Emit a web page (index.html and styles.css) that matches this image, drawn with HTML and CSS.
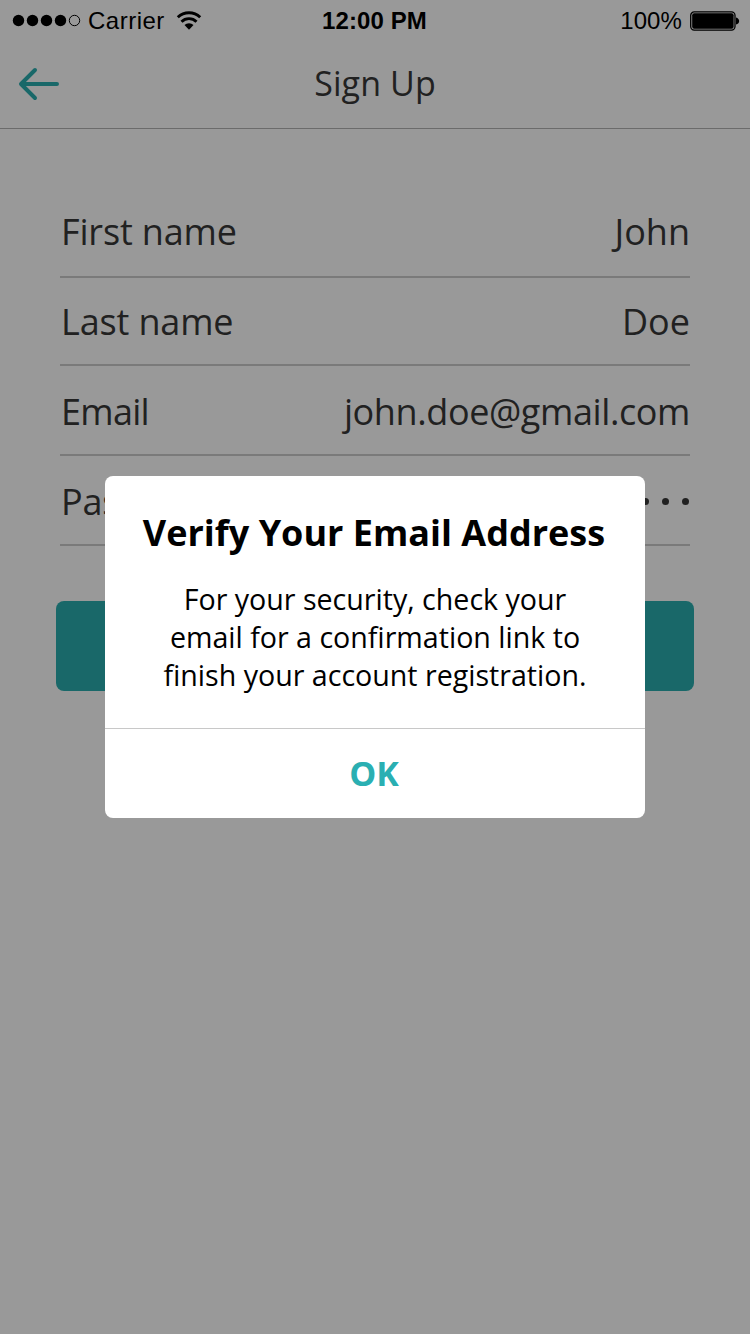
FILE: index.html
```html
<!DOCTYPE html>
<html lang="en">
<head>
<meta charset="utf-8">
<title>Sign Up</title>
<link rel="stylesheet" href="styles.css">
</head>
<body>
<div class="screen">
  <div class="status">
    <div class="status-left">
      <svg class="signal" width="70" height="14" viewBox="0 0 70 14"><circle cx="6.5" cy="6.5" r="5.7"/><circle cx="20.5" cy="6.5" r="5.7"/><circle cx="34.5" cy="6.5" r="5.7"/><circle cx="48.5" cy="6.5" r="5.7"/><circle cx="62.5" cy="6.5" r="5.2" fill="none" stroke="#000" stroke-width="1"/></svg>
      <span class="carrier">Carrier</span>
      <svg class="wifi" width="26" height="20" viewBox="0 0 26 20"><g fill="none" stroke="#000" stroke-width="2.9"><path d="M1.800 6.300a16.200 16.200 0 0 1 22.400 0"/><path d="M5.500 10.700a10.700 10.700 0 0 1 15 0"/></g><path d="M8.500 14a6.400 6.400 0 0 1 9 0L13 18.700z"/></svg>
    </div>
    <div class="time">12:00 PM</div>
    <div class="status-right">
      <span class="percent">100%</span>
      <svg class="battery" width="50" height="20" viewBox="0 0 50 20"><rect x=".7" y=".9" width="44.300" height="18.200" rx="3.500" fill="none" stroke="#000" stroke-width="1.300"/><rect x="2.200" y="2.300" width="41.400" height="15.400" rx="2"/><path d="M46 6.400c4.200 1 4.200 6.200 0 7.200z"/></svg>
    </div>
  </div>
  <header class="nav">
    <svg class="back" width="42" height="34" viewBox="0 0 42 34"><path d="M39 17H3.500M17 3L3 17L17 31" fill="none" stroke="#2baeb0" stroke-width="4" stroke-linecap="round" stroke-linejoin="round"/></svg>
    <h1 class="nav-title">Sign Up</h1>
  </header>
  <form class="form">
    <div class="row row-first"><span class="label">First name</span><span class="value">John</span></div>
    <div class="row"><span class="label">Last name</span><span class="value">Doe</span></div>
    <div class="row row-tall"><span class="label label-email">Email</span><span class="value email">john.doe@gmail.com</span></div>
    <div class="row row-tall"><span class="label">Password</span><span class="dots"><i></i><i></i><i></i><i></i><i></i><i></i><i></i><i></i></span></div>
  </form>
  <div class="submit"></div>
</div>
<div class="overlay">
  <section class="modal">
    <div class="modal-body">
      <h2 class="modal-title">Verify Your Email Address</h2>
      <p class="modal-text">For your security, check your<br>email for a confirmation link to<br>finish your account registration.</p>
    </div>
    <div class="ok">OK</div>
  </section>
</div>
</body>
</html>
```
FILE: styles.css
```css
* { box-sizing: border-box; }
body {
  margin: 0;
  font-family: "Open Sans", sans-serif;
  color: #383838;
  background: #fff;
}
.screen { height: 1334px; overflow: hidden; }
.status {
  height: 40px;
  display: grid;
  grid-template-columns: 1fr auto 1fr;
  align-items: center;
  padding: 1px 10px 0 12px;
  font: 24px/40px "Liberation Sans", Arial, sans-serif;
  color: #000;
}
.status-left, .status-right { display: flex; align-items: center; }
.status-right { justify-content: flex-end; gap: 8px; }
.carrier { margin-left: 6px; letter-spacing: .5px; }
.wifi { margin-left: 11px; }
.battery { margin-bottom: 1px; }
.time { padding-right: 3px; font-weight: 700; letter-spacing: .1px; }
.percent { letter-spacing: .1px; }
.nav {
  height: 89px;
  display: grid;
  grid-template-columns: 100px 1fr 100px;
  align-items: center;
  border-bottom: 1px solid #b2b2b2;
}
.back { margin-left: 18px; }
.nav-title {
  margin: 0;
  padding-bottom: 2px;
  text-align: center;
  font-weight: 400;
  font-size: 34px;
  line-height: 46px;
  letter-spacing: .1px;
}
.form { margin: 55px 60px 0; }
.row {
  height: 88px;
  display: flex;
  align-items: center;
  justify-content: space-between;
  padding: 2px 0 0 1px;
  border-bottom: 2px solid #cbcbcb;
  font-size: 36px;
  line-height: 48px;
}
.row-first, .row-tall { padding-top: 4px; }
.row-first { height: 94px; }
.row-tall { height: 90px; }
.label { letter-spacing: -.15px; }
.label-email { letter-spacing: -.7px; }
.email { letter-spacing: -.4px; }
.dots { display: flex; gap: 13px; padding: 0 1px 2px 0; }
.dots i { width: 7px; height: 7px; border-radius: 50%; background: #383838; }
.submit {
  height: 90px;
  margin: 55px 56px 0;
  border-radius: 8px;
  background: #2baeaf;
}
.overlay {
  position: absolute;
  inset: 0 0 auto 0;
  height: 1334px;
  padding-top: 476px;
  background: rgba(0, 0, 0, .4);
}
.modal {
  width: 540px;
  height: 342px;
  margin: 0 auto;
  border-radius: 8px;
  background: #fff;
  color: #000;
  text-align: center;
}
.modal-body { height: 252px; padding: 33px 0 0; }
.modal-title { margin: 0 2px 23px 0; font-size: 36px; line-height: 48px; font-weight: 700; }
.modal-text { margin: 0; font-size: 28.6px; line-height: 38px; }
.ok {
  height: 90px;
  padding-right: 2px;
  border-top: 1px solid #c8c8c8;
  font-size: 34px;
  line-height: 89px;
  font-weight: 700;
  color: #2aafb2;
}
```
